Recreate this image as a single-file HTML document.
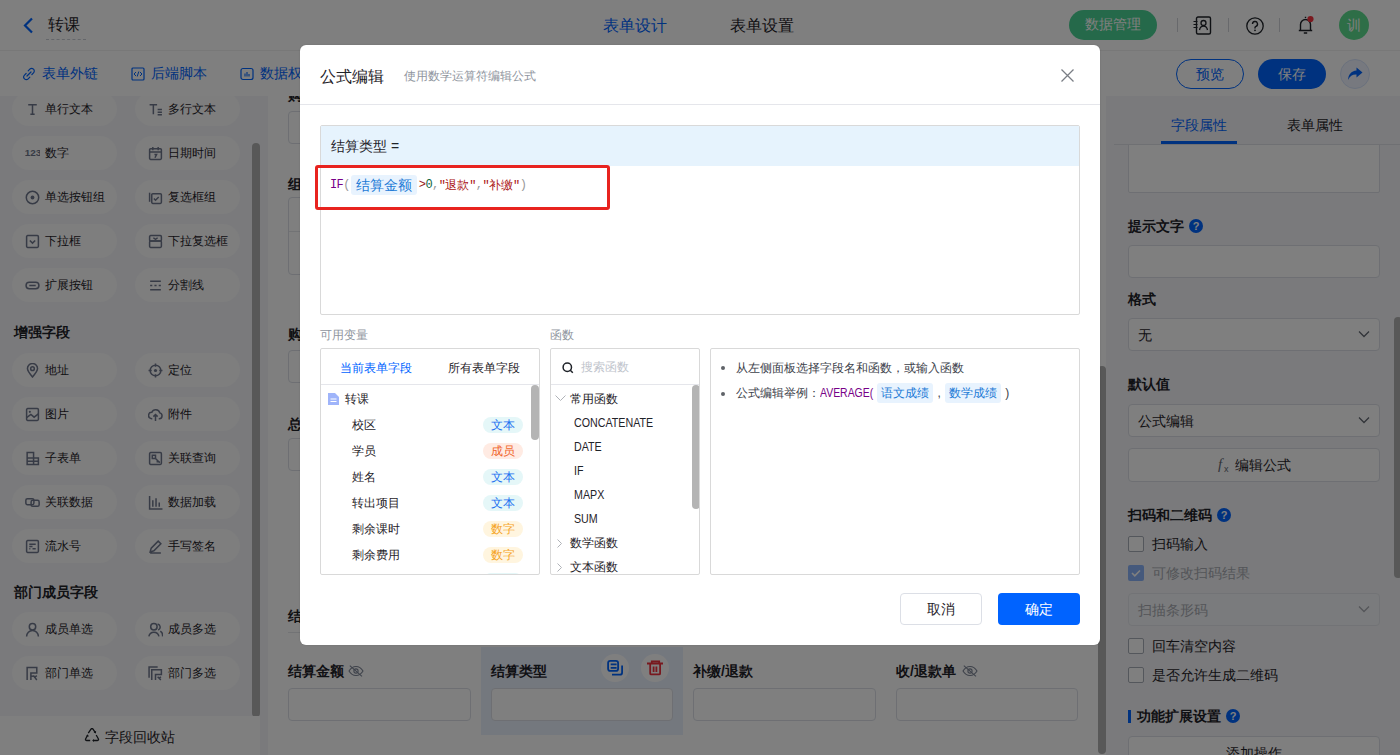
<!DOCTYPE html>
<html><head><meta charset="utf-8">
<style>
*{box-sizing:border-box;margin:0;padding:0}
html,body{width:1400px;height:755px;overflow:hidden;background:#fff}
body{position:relative;font-family:"Liberation Sans",sans-serif;color:#1f2329;font-size:14px}
.a{position:absolute}
.t{position:absolute;white-space:nowrap;line-height:1}
/* header */
#hdr{left:0;top:0;width:1400px;height:51px;background:#fff;border-bottom:1px solid #f0f0f0}
#tb{left:0;top:51px;width:1400px;height:45px;background:#fff}
#lp{left:0;top:96px;width:268px;height:659px;background:#f4f5f8;overflow:hidden}
.pill{position:absolute;width:105px;height:34px;border-radius:17px;background:#fcfcfd}
.pill .ic{position:absolute;left:13px;top:9.5px;width:15px;height:15px}
.pill .tx{position:absolute;left:33px;top:11px;font-size:12px;line-height:12px;white-space:nowrap;color:#1f2329}
.sec{position:absolute;left:14px;font-size:14px;font-weight:bold;line-height:14px;white-space:nowrap}
#cv{left:268px;top:96px;width:838px;height:659px;background:#fff;overflow:hidden}
#rp{left:1106px;top:96px;width:294px;height:659px;background:#f4f5f8;overflow:hidden}
.inp{position:absolute;border:1px solid #dcdfe6;border-radius:4px;background:#fff}
.lbl{position:absolute;font-size:14px;font-weight:bold;line-height:14px;white-space:nowrap}
#ov{left:0;top:0;width:1400px;height:755px;background:rgba(0,0,0,.5)}
#md{left:300px;top:45px;width:800px;height:600px;background:#fff;border-radius:6px;overflow:hidden;box-shadow:0 0 2px rgba(0,0,0,.15)}
.box{position:absolute;border:1px solid #dcdfe6;background:#fff}
.g{fill:none;stroke:#6f778c;stroke-width:1.4}
</style></head><body>

<!-- HEADER -->
<div id="hdr" class="a">
  <svg class="a" style="left:22px;top:17px" width="12" height="17" viewBox="0 0 12 17"><path d="M10 1.5 L3 8.5 L10 15.5" fill="none" stroke="#0064ff" stroke-width="2.2"/></svg>
  <div class="t" style="left:48px;top:17px;font-size:16px">转课</div>
  <div class="a" style="left:46px;top:39px;width:40px;border-top:1px dashed #c9cdd4"></div>
  <div class="t" style="left:603px;top:18px;font-size:16px;color:#0064ff">表单设计</div>
  <div class="t" style="left:730px;top:18px;font-size:16px;color:#1f2329">表单设置</div>
  <div class="a" style="left:1069px;top:10px;width:88px;height:30px;border-radius:15px;background:#4ad294"></div>
  <div class="t" style="left:1085px;top:17px;font-size:14px;color:#fff">数据管理</div>
  <div class="a" style="left:1177px;top:18px;width:1px;height:14px;background:#d0d3d9"></div>
  <svg class="a" style="left:1193px;top:16px" width="19" height="19" viewBox="0 0 19 19"><rect x="3.5" y="1" width="14" height="17" rx="1.5" fill="none" stroke="#1f2329" stroke-width="1.4"/><circle cx="10.5" cy="7" r="2.5" fill="none" stroke="#1f2329" stroke-width="1.3"/><path d="M6.5 14c0.5-2.5 2-3.8 4-3.8s3.5 1.3 4 3.8" fill="none" stroke="#1f2329" stroke-width="1.3"/><path d="M0.5 5.5h4M0.5 8.5h4M0.5 11.5h4" stroke="#1f2329" stroke-width="1.2"/></svg>
  <svg class="a" style="left:1246px;top:17px" width="18" height="18" viewBox="0 0 18 18"><circle cx="9" cy="9" r="8.2" fill="none" stroke="#1f2329" stroke-width="1.3"/><path d="M6.5 7a2.5 2.5 0 1 1 3.5 2.3c-0.7 0.3-1 0.8-1 1.5v0.7" fill="none" stroke="#1f2329" stroke-width="1.4"/><circle cx="9" cy="13.3" r="0.9" fill="#1f2329"/></svg>
  <svg class="a" style="left:1297px;top:15px" width="20" height="20" viewBox="0 0 20 20"><path d="M8.5 1.8v1.2M3.5 15.5V9.5a5 5 0 0 1 10 0v6M1.8 15.5h13.4M6.8 18h3.4" fill="none" stroke="#1f2329" stroke-width="1.4"/><circle cx="13.5" cy="4" r="3.1" fill="#f5333f"/></svg>
  <div class="a" style="left:1228px;top:18px;width:1px;height:14px;background:#d0d3d9"></div>
  <div class="a" style="left:1279px;top:18px;width:1px;height:14px;background:#d0d3d9"></div>
  <div class="a" style="left:1339px;top:10px;width:30px;height:30px;border-radius:15px;background:#5ddc8e"></div>
  <div class="t" style="left:1347px;top:18px;font-size:14px;color:#fff">训</div>
</div>

<!-- TOOLBAR -->
<div id="tb" class="a">
  <svg class="a" style="left:22px;top:16px" width="14" height="14" viewBox="0 0 14 14"><path d="M6.2 3.8l1.6-1.6a2.6 2.6 0 0 1 3.7 3.7L9.9 7.5M7.8 10.2l-1.6 1.6a2.6 2.6 0 0 1-3.7-3.7L4.1 6.5M5 9l4-4" fill="none" stroke="#0064ff" stroke-width="1.2" stroke-linecap="round"/></svg>
  <div class="t" style="left:42px;top:15px;font-size:14px;color:#0064ff">表单外链</div>
  <svg class="a" style="left:131px;top:16px" width="14" height="14" viewBox="0 0 14 14"><rect x="1" y="1" width="12" height="12" rx="1" fill="none" stroke="#0064ff" stroke-width="1.2"/><path d="M5 5L3 7l2 2M9 5l2 2-2 2M7.8 4.5l-1.6 5" fill="none" stroke="#0064ff" stroke-width="1"/></svg>
  <div class="t" style="left:151px;top:15px;font-size:14px;color:#0064ff">后端脚本</div>
  <svg class="a" style="left:240px;top:16px" width="14" height="14" viewBox="0 0 14 14"><rect x="1" y="1.5" width="12" height="11" rx="2" fill="none" stroke="#0064ff" stroke-width="1.2"/><path d="M5 6.5v3M7 5v4.5M9 7v2.5" fill="none" stroke="#0064ff" stroke-width="1.1"/></svg>
  <div class="t" style="left:260px;top:15px;font-size:14px;color:#0064ff">数据权限</div>
  <div class="a" style="left:1176px;top:8px;width:68px;height:30px;border-radius:15px;border:1px solid #0064ff"></div>
  <div class="t" style="left:1196px;top:16px;font-size:14px;color:#0064ff">预览</div>
  <div class="a" style="left:1258px;top:8px;width:68px;height:30px;border-radius:15px;background:#0064ff"></div>
  <div class="t" style="left:1278px;top:16px;font-size:14px;color:#fff">保存</div>
  <div class="a" style="left:1340px;top:8px;width:30px;height:30px;border-radius:15px;background:#eef3fe;border:1px solid #d6e2fb"></div>
  <svg class="a" style="left:1347px;top:16px" width="16" height="14" viewBox="0 0 16 14"><path d="M9.5 0.5L15.5 5.5 9.5 10.5V7.6C5.5 7.4 3 9 1 13 1.3 7.5 4.2 3.8 9.5 3.4Z" fill="#0064ff"/></svg>
</div>

<!-- LEFT PANEL -->
<div id="lp" class="a">
<div class="pill" style="left:12px;top:-4px"><svg class="ic" viewBox="0 0 14 14"><path class="g" d="M3 2.5h8M7 2.5v9M5 11.5h4"/></svg><div class="tx">单行文本</div></div>
<div class="pill" style="left:135px;top:-4px"><svg class="ic" viewBox="0 0 14 14"><path class="g" d="M1.5 2.5h7M5 2.5v9M9 7h4M9 9.5h4M9 12h4"/></svg><div class="tx">多行文本</div></div>
<div class="pill" style="left:12px;top:40px"><svg class="ic" viewBox="0 0 14 14"><text x="-0.3" y="9.3" style="font-family:'Liberation Sans',sans-serif;font-size:9.3px;font-weight:bold" fill="#6f778c">123</text></svg><div class="tx">数字</div></div>
<div class="pill" style="left:135px;top:40px"><svg class="ic" viewBox="0 0 14 14"><rect class="g" x="1.5" y="2.5" width="11" height="10" rx="1"/><path class="g" d="M1.5 5.5h11M4.5 1v3M9.5 1v3M6 8l2 0-1.5 3"/></svg><div class="tx">日期时间</div></div>
<div class="pill" style="left:12px;top:84px"><svg class="ic" viewBox="0 0 14 14"><circle class="g" cx="7" cy="7" r="5.8"/><circle cx="7" cy="7" r="1.8" fill="#6f778c"/></svg><div class="tx">单选按钮组</div></div>
<div class="pill" style="left:135px;top:84px"><svg class="ic" viewBox="0 0 14 14"><path class="g" d="M1.5 11V2.5"/><rect class="g" x="3.5" y="3.5" width="9" height="9" rx="1"/><path class="g" d="M5.5 8l1.5 1.5 3-3"/></svg><div class="tx">复选框组</div></div>
<div class="pill" style="left:12px;top:128px"><svg class="ic" viewBox="0 0 14 14"><rect class="g" x="1.5" y="1.5" width="11" height="11" rx="1"/><path class="g" d="M4.5 6l2.5 2.5 2.5-2.5"/></svg><div class="tx">下拉框</div></div>
<div class="pill" style="left:135px;top:128px"><svg class="ic" viewBox="0 0 14 14"><rect class="g" x="1.5" y="1.5" width="11" height="5" rx="1"/><rect class="g" x="1.5" y="6.5" width="11" height="6" rx="1"/><path class="g" d="M5 3.5l2 1.5 2-1.5"/></svg><div class="tx">下拉复选框</div></div>
<div class="pill" style="left:12px;top:172px"><svg class="ic" viewBox="0 0 14 14"><rect class="g" x="1" y="4" width="12" height="6" rx="3"/><path class="g" d="M4 7h6"/></svg><div class="tx">扩展按钮</div></div>
<div class="pill" style="left:135px;top:172px"><svg class="ic" viewBox="0 0 14 14"><path class="g" d="M2 3h10M2 11h10M2 7h2M6 7h2M10 7h2"/></svg><div class="tx">分割线</div></div>
<div class="sec" style="top:229px">增强字段</div>
<div class="pill" style="left:12px;top:257px"><svg class="ic" viewBox="0 0 14 14"><path class="g" d="M7 13C3.5 9 2.3 7 2.3 5.2A4.7 4.7 0 0 1 11.7 5.2C11.7 7 10.5 9 7 13Z"/><circle class="g" cx="7" cy="5.3" r="1.7"/></svg><div class="tx">地址</div></div>
<div class="pill" style="left:135px;top:257px"><svg class="ic" viewBox="0 0 14 14"><circle class="g" cx="7" cy="7" r="5"/><circle cx="7" cy="7" r="1.5" fill="#6f778c"/><path class="g" d="M7 0.5v3M7 10.5v3M0.5 7h3M10.5 7h3"/></svg><div class="tx">定位</div></div>
<div class="pill" style="left:12px;top:301px"><svg class="ic" viewBox="0 0 14 14"><rect class="g" x="1.5" y="1.5" width="11" height="11" rx="1"/><path class="g" d="M1.5 10l4-3 3 2.5 4-3"/><circle cx="4.5" cy="4.5" r="1" fill="#6f778c"/></svg><div class="tx">图片</div></div>
<div class="pill" style="left:135px;top:301px"><svg class="ic" viewBox="0 0 14 14"><path class="g" d="M4 11H3.5A3 3 0 0 1 3.5 5 4 4 0 0 1 11 5.5 2.8 2.8 0 0 1 10.5 11H10M7 13V7M5 9l2-2 2 2"/></svg><div class="tx">附件</div></div>
<div class="pill" style="left:12px;top:345px"><svg class="ic" viewBox="0 0 14 14"><path class="g" d="M2 1.5h6v11H2zM8 6.5h4.5v6H8M2 6.5h6M2 9.5h10.5"/></svg><div class="tx">子表单</div></div>
<div class="pill" style="left:135px;top:345px"><svg class="ic" viewBox="0 0 14 14"><rect class="g" x="1.5" y="1.5" width="11" height="11" rx="1"/><path class="g" d="M4 4h3v3H4zM7 7l4 4M8 10h3"/></svg><div class="tx">关联查询</div></div>
<div class="pill" style="left:12px;top:389px"><svg class="ic" viewBox="0 0 14 14"><rect class="g" x="0.8" y="3.5" width="7.5" height="5.5" rx="1.5"/><rect class="g" x="5.7" y="5" width="7.5" height="5.5" rx="1.5"/></svg><div class="tx">关联数据</div></div>
<div class="pill" style="left:135px;top:389px"><svg class="ic" viewBox="0 0 14 14"><path class="g" d="M1.5 1v12h12M4.5 5v6M7.5 3v8M10.5 7v4"/></svg><div class="tx">数据加载</div></div>
<div class="pill" style="left:12px;top:433px"><svg class="ic" viewBox="0 0 14 14"><rect class="g" x="1.5" y="1.5" width="11" height="11" rx="1"/><path class="g" d="M4 5h6M4 7h3M7 9h3M4 9h1"/></svg><div class="tx">流水号</div></div>
<div class="pill" style="left:135px;top:433px"><svg class="ic" viewBox="0 0 14 14"><path class="g" d="M2 12l1-3.5 6.5-6.5 2.5 2.5-6.5 6.5zM2 13h10"/></svg><div class="tx">手写签名</div></div>
<div class="sec" style="top:489px">部门成员字段</div>
<div class="pill" style="left:12px;top:516px"><svg class="ic" viewBox="0 0 14 14"><circle class="g" cx="7" cy="4.5" r="3"/><path class="g" d="M1.5 13.5A5.5 5.5 0 0 1 12.5 13.5"/></svg><div class="tx">成员单选</div></div>
<div class="pill" style="left:135px;top:516px"><svg class="ic" viewBox="0 0 14 14"><circle class="g" cx="5.5" cy="4.5" r="3"/><path class="g" d="M0.8 13.5A4.8 4.8 0 0 1 10.2 13.5M9 1.8A3 3 0 0 1 9.5 7.5M11.5 8.5A4.8 4.8 0 0 1 13.5 13.5"/></svg><div class="tx">成员多选</div></div>
<div class="pill" style="left:12px;top:560px"><svg class="ic" viewBox="0 0 14 14"><path class="g" d="M2 13V1.5h9v5H5.5v6.5M8 9l3 4M11 9l-2.5 2"/><path class="g" d="M5.5 9.5h3"/></svg><div class="tx">部门单选</div></div>
<div class="pill" style="left:135px;top:560px"><svg class="ic" viewBox="0 0 14 14"><path class="g" d="M1 11V1h8M3.5 13V3.5h9v4.5H7v5M9 10l3 3M12 10l-2 2"/></svg><div class="tx">部门多选</div></div>
<div class="a" style="left:252px;top:47px;width:8px;height:574px;border-radius:4px;background:#b0b0b0"></div>
<div class="a" style="left:0;top:620px;width:260px;height:39px;background:#fff"></div>
<svg class="a" style="left:84px;top:632px" width="16" height="15" viewBox="0 0 16 15"><path d="M4.3 5.2L6.8 1.3Q8 -0.2 9.2 1.3L11 4.2M12.2 7L14.3 10.8Q15 12.5 13.5 12.5H9M6.2 12.5H2.5Q1 12.5 1.7 10.8L3.4 7.6" fill="none" stroke="#1f2329" stroke-width="1.3"/><path d="M9.6 4.6L12 5.4 12.1 2.8zM9.8 10.9L8.2 12.5 9.8 14.1zM2.2 8.2L3.6 6.2 5 8.4z" fill="#1f2329"/></svg>
<div class="t" style="left:105px;top:634px;font-size:14px;color:#1f2329">字段回收站</div>
</div>

<!-- CANVAS -->
<div id="cv" class="a">
<div class="lbl" style="left:20px;top:-8px;">购买课程</div>
<div class="inp" style="left:20px;top:15px;width:790px;height:33px"></div>
<div class="lbl" style="left:20px;top:81px;">组合课程</div>
<div class="inp" style="left:20px;top:101px;width:790px;height:78px"></div>
<div class="a" style="left:21px;top:135px;width:788px;height:1px;background:#e5e6eb"></div>
<div class="lbl" style="left:20px;top:231px;">购买金额</div>
<div class="inp" style="left:20px;top:254px;width:790px;height:33px"></div>
<div class="lbl" style="left:20px;top:321px;">总金额</div>
<div class="inp" style="left:20px;top:342px;width:790px;height:33px"></div>
<div class="lbl" style="left:20px;top:513px;">结算信息</div>
<div class="a" style="left:20px;top:536px;width:790px;height:1px;background:#e5e6eb"></div>
<div class="a" style="left:213px;top:551px;width:202px;height:88px;background:#e9f0fd"></div>
<div class="lbl" style="left:20px;top:568px;">结算金额</div>
<div class="inp" style="left:20px;top:592px;width:183px;height:33px"></div>
<div class="lbl" style="left:223px;top:568px;">结算类型</div>
<div class="inp" style="left:223px;top:592px;width:182px;height:33px"></div>
<div class="lbl" style="left:425px;top:568px;">补缴/退款</div>
<div class="inp" style="left:425px;top:592px;width:183px;height:33px"></div>
<div class="lbl" style="left:628px;top:568px;">收/退款单</div>
<div class="inp" style="left:628px;top:592px;width:182px;height:33px"></div>
<svg class="a" style="left:80px;top:569px" width="16" height="12" viewBox="0 0 16 12"><path d="M1 6C3 2.6 5.4 1.5 8 1.5S13 2.6 15 6C13 9.4 10.6 10.5 8 10.5S3 9.4 1 6z" fill="none" stroke="#7d8596" stroke-width="1.1"/><circle cx="8" cy="6" r="2.1" fill="none" stroke="#7d8596" stroke-width="1.1"/><path d="M1.8 0.6L14 11.4" stroke="#7d8596" stroke-width="1.1"/></svg>
<svg class="a" style="left:694px;top:569px" width="16" height="12" viewBox="0 0 16 12"><path d="M1 6C3 2.6 5.4 1.5 8 1.5S13 2.6 15 6C13 9.4 10.6 10.5 8 10.5S3 9.4 1 6z" fill="none" stroke="#7d8596" stroke-width="1.1"/><circle cx="8" cy="6" r="2.1" fill="none" stroke="#7d8596" stroke-width="1.1"/><path d="M1.8 0.6L14 11.4" stroke="#7d8596" stroke-width="1.1"/></svg>
<div class="a" style="left:333px;top:558px;width:28px;height:28px;border-radius:14px;background:#fff"></div>
<svg class="a" style="left:336px;top:562px" width="20" height="20" viewBox="0 0 20 20"><rect x="4.1" y="2.9" width="10" height="10" rx="2.2" fill="none" stroke="#0064ff" stroke-width="1.8"/><path d="M6.7 6.3h5.9M6.7 9.8h5.9" stroke="#0064ff" stroke-width="1.7"/><path d="M18.1 7.5V14.4a2.3 2.3 0 0 1-2.3 2.3H8" fill="none" stroke="#0064ff" stroke-width="1.8"/></svg>
<div class="a" style="left:373px;top:558px;width:28px;height:28px;border-radius:14px;background:#fff"></div>
<svg class="a" style="left:376px;top:562px" width="20" height="20" viewBox="0 0 20 20"><path d="M3 5.5h16M7.8 5.5V3.3h7.4v2.2M6.2 5.5V15.4a1 1 0 0 0 1 1h7.9a1 1 0 0 0 1-1V5.5M9.6 8.5v5.5M12.4 8.5v5.5" fill="none" stroke="#f0313c" stroke-width="1.8"/></svg>
<div class="a" style="left:830px;top:270px;width:8px;height:388px;border-radius:4px;background:#b0b0b0"></div>
</div>

<!-- RIGHT PANEL -->
<div id="rp" class="a">
<div class="t" style="left:65px;top:22px;font-size:14px;color:#0064ff">字段属性</div>
<div class="t" style="left:181px;top:22px;font-size:14px;color:#1f2329">表单属性</div>
<div class="a" style="left:8px;top:48px;width:286px;height:1px;background:#dfe1e6"></div>
<div class="a" style="left:55px;top:45px;width:76px;height:3px;background:#0064ff"></div>
<div class="a" style="left:0;top:49px;width:294px;height:610px;overflow:hidden">
<div class="inp" style="left:22px;top:-20px;width:252px;height:68px;border-radius:2px"></div>
<div class="lbl" style="left:22px;top:74px;">提示文字</div>
<div class="a" style="left:83px;top:74px;width:14px;height:14px;border-radius:7px;background:#0064ff;color:#fff;font-size:11px;font-weight:bold;line-height:14px;text-align:center">?</div>
<div class="inp" style="left:22px;top:100px;width:252px;height:33px"></div>
<div class="lbl" style="left:22px;top:147px;">格式</div>
<div class="inp" style="left:22px;top:173px;width:252px;height:33px"></div>
<div class="t" style="left:32px;top:183px;font-size:14px">无</div>
<svg class="a" style="left:252px;top:185px" width="12" height="8" viewBox="0 0 12 8"><path d="M1 1.5l5 5 5-5" fill="none" stroke="#646a73" stroke-width="1.3"/></svg>
<div class="lbl" style="left:22px;top:232px;">默认值</div>
<div class="inp" style="left:22px;top:259px;width:252px;height:33px"></div>
<div class="t" style="left:32px;top:269px;font-size:14px">公式编辑</div>
<svg class="a" style="left:252px;top:271px" width="12" height="8" viewBox="0 0 12 8"><path d="M1 1.5l5 5 5-5" fill="none" stroke="#646a73" stroke-width="1.3"/></svg>
<div class="inp" style="left:22px;top:303px;width:252px;height:34px"></div>
<div class="t" style="left:112px;top:312px;font-size:15px;font-style:italic;font-family:'Liberation Serif',serif;color:#646a73">f</div><div class="t" style="left:118px;top:320px;font-size:9px;color:#646a73">x</div>
<div class="t" style="left:129px;top:313px;font-size:14px">编辑公式</div>
<div class="lbl" style="left:22px;top:363px;">扫码和二维码</div>
<div class="a" style="left:111px;top:363px;width:14px;height:14px;border-radius:7px;background:#0064ff;color:#fff;font-size:11px;font-weight:bold;line-height:14px;text-align:center">?</div>
<div class="a" style="left:22px;top:391px;width:16px;height:16px;border:1px solid #a9aeb8;border-radius:2px;background:#fff"></div>
<div class="t" style="left:46px;top:392px;font-size:14.3px">扫码输入</div>
<div class="a" style="left:22px;top:420px;width:16px;height:16px;border-radius:2px;background:#8bb3f8"></div><svg class="a" style="left:25px;top:423px" width="10" height="10" viewBox="0 0 10 10"><path d="M1 5l2.8 2.8L9 2.5" fill="none" stroke="#fff" stroke-width="1.6"/></svg>
<div class="t" style="left:46px;top:421px;font-size:14.3px;color:#a8abb2">可修改扫码结果</div>
<div class="inp" style="left:22px;top:448px;width:252px;height:33px;background:#f5f7fa;border-color:#e4e7ed"></div>
<div class="t" style="left:32px;top:458px;font-size:14px;color:#a8abb2">扫描条形码</div>
<svg class="a" style="left:252px;top:460px" width="12" height="8" viewBox="0 0 12 8"><path d="M1 1.5l5 5 5-5" fill="none" stroke="#a8abb2" stroke-width="1.3"/></svg>
<div class="a" style="left:22px;top:493px;width:16px;height:16px;border:1px solid #a9aeb8;border-radius:2px;background:#fff"></div>
<div class="t" style="left:46px;top:494px;font-size:14.3px">回车清空内容</div>
<div class="a" style="left:22px;top:522px;width:16px;height:16px;border:1px solid #a9aeb8;border-radius:2px;background:#fff"></div>
<div class="t" style="left:46px;top:523px;font-size:14.3px">是否允许生成二维码</div>
<div class="a" style="left:22px;top:565px;width:3px;height:13px;background:#0064ff"></div>
<div class="lbl" style="left:31px;top:564px;">功能扩展设置</div>
<div class="a" style="left:120px;top:564px;width:14px;height:14px;border-radius:7px;background:#0064ff;color:#fff;font-size:11px;font-weight:bold;line-height:14px;text-align:center">?</div>
<div class="inp" style="left:22px;top:591px;width:252px;height:33px"></div>
<div class="t" style="left:120px;top:601px;font-size:14px">添加操作</div>
</div>
<div class="a" style="left:288px;top:221px;width:8px;height:261px;border-radius:4px;background:#b0b0b0"></div>
</div>

<div id="ov" class="a"></div>

<!-- MODAL -->
<div id="md" class="a">
<div class="a" style="left:0;top:-1px;width:800px;height:601px">
<div class="t" style="left:20px;top:25px;font-size:16px;color:#1f2329">公式编辑</div>
<div class="t" style="left:104px;top:26px;font-size:12px;color:#8f959e">使用数学运算符编辑公式</div>
<svg class="a" style="left:761px;top:25px" width="13" height="13" viewBox="0 0 13 13"><path d="M0.5 0.5l12 12M12.5 0.5l-12 12" stroke="#7a7e85" stroke-width="1.3"/></svg>
<div class="a" style="left:0;top:60px;width:800px;height:1px;background:#e5e6eb"></div>
<div class="box" style="left:20px;top:81px;width:760px;height:190px;border-color:#d9d9d9;border-radius:2px"></div>
<div class="a" style="left:21px;top:82px;width:758px;height:40px;background:#e6f3fd"></div>
<div class="t" style="left:31px;top:95px;font-size:14px;color:#1f2329">结算类型 =</div>
<div class="a" style="left:30px;top:131px;height:20px;display:flex;align-items:center;white-space:nowrap;font-size:12px;letter-spacing:-0.6px;font-family:'Liberation Mono',monospace"><span style="color:#770088">IF</span><span style="color:#999">(</span><span style="display:inline-block;margin:0 2px 0 1px;padding:0 5px;height:20px;line-height:20px;background:#e8f3fe;color:#1b7ad6;border-radius:3px;font-size:14px;letter-spacing:0;font-family:'Liberation Sans',sans-serif">结算金额</span><span style="color:#981a1a">&gt;</span><span style="color:#116644">0</span><span style="color:#999">,</span><span style="color:#aa1111">"<span style="letter-spacing:0">退款</span>"</span><span style="color:#999">,</span><span style="color:#aa1111">"<span style="letter-spacing:0">补缴</span>"</span><span style="color:#999">)</span></div>
<div class="a" style="left:15px;top:121px;width:295px;height:45px;border:3px solid #e8231f;border-radius:3px"></div>
<div class="t" style="left:20px;top:285px;font-size:12px;color:#8f959e">可用变量</div>
<div class="t" style="left:250px;top:285px;font-size:12px;color:#8f959e">函数</div>
<div class="box" style="left:20px;top:304px;width:220px;height:227px;overflow:hidden;border-color:#d9d9d9;border-radius:2px"><div class="t" style="left:19px;top:13px;font-size:12px;color:#0064ff">当前表单字段</div><div class="t" style="left:127px;top:13px;font-size:12px;color:#1f2329">所有表单字段</div><div class="a" style="left:0;top:35px;width:218px;height:1px;background:#e5e6eb"></div><svg class="a" style="left:7px;top:44px" width="11" height="12" viewBox="0 0 11 12"><path d="M0 0h7l4 4v8H0z" fill="#9fb4fa"/><path d="M2.5 6h6M2.5 8.5h6" stroke="#fff" stroke-width="1.2"/></svg><div class="t" style="left:24px;top:44px;font-size:12px">转课</div><div class="t" style="left:31px;top:70px;font-size:12px">校区</div><div class="a" style="left:162px;top:68px;width:40px;height:16px;border-radius:8px;background:#e5f7f8;color:#2271f1;font-size:12px;line-height:16px;text-align:center">文本</div><div class="t" style="left:31px;top:96px;font-size:12px">学员</div><div class="a" style="left:162px;top:94px;width:40px;height:16px;border-radius:8px;background:#ffebe3;color:#f0652a;font-size:12px;line-height:16px;text-align:center">成员</div><div class="t" style="left:31px;top:122px;font-size:12px">姓名</div><div class="a" style="left:162px;top:120px;width:40px;height:16px;border-radius:8px;background:#e5f7f8;color:#2271f1;font-size:12px;line-height:16px;text-align:center">文本</div><div class="t" style="left:31px;top:148px;font-size:12px">转出项目</div><div class="a" style="left:162px;top:146px;width:40px;height:16px;border-radius:8px;background:#e5f7f8;color:#2271f1;font-size:12px;line-height:16px;text-align:center">文本</div><div class="t" style="left:31px;top:174px;font-size:12px">剩余课时</div><div class="a" style="left:162px;top:172px;width:40px;height:16px;border-radius:8px;background:#fff5df;color:#f5a31d;font-size:12px;line-height:16px;text-align:center">数字</div><div class="t" style="left:31px;top:200px;font-size:12px">剩余费用</div><div class="a" style="left:162px;top:198px;width:40px;height:16px;border-radius:8px;background:#fff5df;color:#f5a31d;font-size:12px;line-height:16px;text-align:center">数字</div><div class="a" style="left:162px;top:224px;width:40px;height:16px;border-radius:8px;background:#e5f7f8;color:#2271f1;font-size:12px;line-height:16px;text-align:center">文本</div><div class="a" style="left:210px;top:36px;width:8px;height:55px;border-radius:4px;background:#b4b4b4"></div></div>
<div class="box" style="left:250px;top:304px;width:150px;height:227px;overflow:hidden;border-color:#d9d9d9;border-radius:2px"><svg class="a" style="left:11px;top:13px" width="12" height="12" viewBox="0 0 12 12"><circle cx="5.3" cy="5.3" r="4.2" fill="none" stroke="#1f2329" stroke-width="1.5"/><path d="M8.3 8.3l2.5 2.5" stroke="#1f2329" stroke-width="1.5"/></svg><div class="t" style="left:30px;top:12px;font-size:12px;color:#c0c4cc">搜索函数</div><div class="a" style="left:0;top:35px;width:148px;height:1px;background:#e5e6eb"></div><svg class="a" style="left:4px;top:46px" width="11" height="7" viewBox="0 0 11 7"><path d="M0.5 0.5l5 5 5-5" fill="none" stroke="#b0b3b8" stroke-width="1"/></svg><div class="t" style="left:19px;top:44px;font-size:12px">常用函数</div><div class="t" style="left:23px;top:68px;font-size:12px;transform:scaleX(.89);transform-origin:0 0">CONCATENATE</div><div class="t" style="left:23px;top:92px;font-size:12px;transform:scaleX(.89);transform-origin:0 0">DATE</div><div class="t" style="left:23px;top:116px;font-size:12px;transform:scaleX(.89);transform-origin:0 0">IF</div><div class="t" style="left:23px;top:140px;font-size:12px;transform:scaleX(.89);transform-origin:0 0">MAPX</div><div class="t" style="left:23px;top:164px;font-size:12px;transform:scaleX(.89);transform-origin:0 0">SUM</div><svg class="a" style="left:6px;top:190px" width="5" height="9" viewBox="0 0 5 9"><path d="M0.5 0.5l4 4-4 4" fill="none" stroke="#b0b3b8" stroke-width="1"/></svg><div class="t" style="left:19px;top:188px;font-size:12px">数学函数</div><svg class="a" style="left:6px;top:214px" width="5" height="9" viewBox="0 0 5 9"><path d="M0.5 0.5l4 4-4 4" fill="none" stroke="#b0b3b8" stroke-width="1"/></svg><div class="t" style="left:19px;top:212px;font-size:12px">文本函数</div><div class="a" style="left:141px;top:36px;width:8px;height:124px;border-radius:4px;background:#b4b4b4"></div></div>
<div class="box" style="left:410px;top:304px;width:370px;height:227px;overflow:hidden;border-color:#d9d9d9;border-radius:2px"><div class="a" style="left:10px;top:17px;width:4px;height:4px;border-radius:2px;background:#5f6368"></div><div class="t" style="left:25px;top:13px;font-size:12px;color:#3d424b">从左侧面板选择字段名和函数，或输入函数</div><div class="a" style="left:10px;top:43px;width:4px;height:4px;border-radius:2px;background:#5f6368"></div><div class="a" style="left:25px;top:34px;height:20px;display:flex;align-items:center;white-space:nowrap;font-size:12px;color:#3d424b">公式编辑举例：<span style="display:inline-block;color:#770088;transform:scaleX(.87);transform-origin:0 50%;margin-right:-8px">AVERAGE(</span><span style="width:4px;display:inline-block"></span><span style="display:inline-block;padding:0 4px;height:20px;line-height:20px;background:#e8f3fe;color:#1b7ad6;border-radius:3px">语文成绩</span><span style="display:inline-block;width:12px;text-align:center">,</span><span style="display:inline-block;padding:0 4px;height:20px;line-height:20px;background:#e8f3fe;color:#1b7ad6;border-radius:3px">数学成绩</span><span style="display:inline-block;margin-left:4px">)</span></div></div>
<div class="a" style="left:600px;top:549px;width:82px;height:32px;border:1px solid #dcdfe6;border-radius:4px;background:#fff;font-size:14px;line-height:30px;text-align:center;color:#1f2329">取消</div>
<div class="a" style="left:698px;top:549px;width:82px;height:32px;border-radius:4px;background:#0063ff;font-size:14px;line-height:32px;text-align:center;color:#fff">确定</div>
</div>
</div>

</body></html>
